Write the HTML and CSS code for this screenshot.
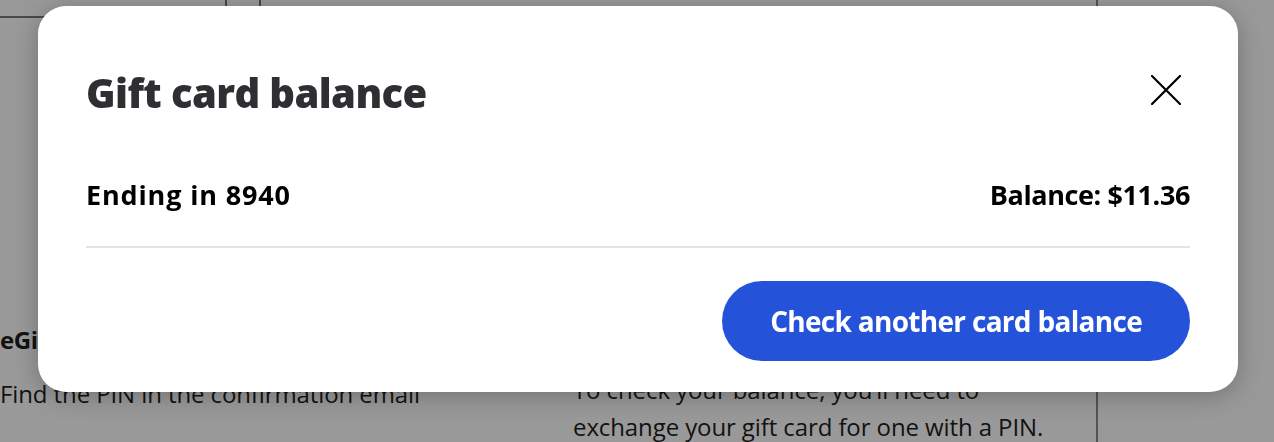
FILE: index.html
```html
<!DOCTYPE html>
<html lang="en">
<head>
<meta charset="utf-8">
<title>Gift card balance</title>
<link rel="stylesheet" href="styles.css">
</head>
<body>
<div class="page">
  <div class="page-top">
    <span class="rule-h"></span>
    <span class="rule-v rule-a"></span>
    <span class="rule-v rule-b"></span>
    <span class="rule-v rule-c"></span>
  </div>
  <div class="page-cols">
    <div class="col col-left">
      <h3 class="col-title">eGift cards</h3>
      <p class="col-text">Find the PIN in the confirmation email</p>
    </div>
    <div class="col col-right">
      <p class="col-text">To check your balance, you’ll need to exchange your gift card for one with a PIN.</p>
    </div>
  </div>
</div>

<div class="overlay"></div>

<div class="modal" role="dialog" aria-labelledby="modal-title">
  <div class="modal-head">
    <h2 class="modal-title" id="modal-title">Gift card balance</h2>
    <button class="close-btn" aria-label="Close">
      <svg width="30" height="30" viewBox="0 0 30 30" aria-hidden="true">
        <path d="M1 1 L29 29 M29 1 L1 29" stroke="#000" stroke-width="2.2" stroke-linecap="square" fill="none"/>
      </svg>
    </button>
  </div>
  <div class="balance-row">
    <span class="balance-label">Ending in 8940</span>
    <span class="balance-value">Balance: $11.36</span>
  </div>
  <div class="modal-actions">
    <button class="primary-btn">Check another card balance</button>
  </div>
</div>
</body>
</html>
```

FILE: styles.css
```css
* { box-sizing: border-box; }

html, body {
  margin: 0;
  padding: 0;
  width: 1274px;
  height: 442px;
  overflow: hidden;
  background: #ffffff;
  font-family: "Open Sans", "Lato", "Liberation Sans", sans-serif;
}

/* ---------- background page ---------- */
.page {
  position: relative;
  width: 1274px;
  height: 442px;
  color: #1f1f1f;
}

.page-top {
  height: 0;
}

.rule-h {
  position: absolute;
  left: 0;
  top: 16px;
  width: 300px;
  height: 2px;
  background: #7a7a7a;
}

.rule-v {
  position: absolute;
  top: 0;
  width: 2px;
  height: 442px;
  background: #7a7a7a;
}
.rule-a { left: 225px; height: 40px; }
.rule-b { left: 259px; height: 40px; }
.rule-c { left: 1096px; background: #8a8a8a; }

.page-cols {
  display: grid;
  grid-template-columns: 573px 500px;
  padding-top: 322px;
}

.col-title {
  margin: 0;
  font-size: 24px;
  font-weight: 700;
  line-height: 36px;
  letter-spacing: -0.4px;
}

.col-text {
  margin: 0;
  font-size: 24px;
  font-weight: 400;
  line-height: 37px;
  letter-spacing: -0.1px;
}

.col-left .col-text { margin-top: 17px; }
.col-right { padding-top: 49px; }

.overlay {
  position: fixed;
  inset: 0;
  background: rgba(0, 0, 0, 0.4);
}

/* ---------- modal ---------- */
.modal {
  position: absolute;
  left: 38px;
  top: 6px;
  width: 1200px;
  height: 386px;
  background: #ffffff;
  border-radius: 28px;
  box-shadow: 0 4px 24px rgba(0, 0, 0, 0.25);
  padding: 63px 48px 32px 48px;
  display: flex;
  flex-direction: column;
}

.modal-head {
  display: flex;
  align-items: center;
  justify-content: space-between;
  height: 48px;
}

.modal-title {
  margin: 0;
  font-size: 40px;
  line-height: 48px;
  font-weight: 800;
  color: #2e2f32;
  letter-spacing: -0.6px;
}

.close-btn {
  border: 0;
  background: transparent;
  padding: 0;
  margin: -6px 9px 0 0;
  width: 30px;
  height: 30px;
  display: flex;
  cursor: pointer;
}

.balance-row {
  margin-top: 62px;
  display: flex;
  justify-content: space-between;
  align-items: center;
  line-height: 32px;
  font-size: 27px;
  font-weight: 700;
  color: #000;
  padding-bottom: 35px;
  border-bottom: 2px solid #e3e4e5;
}

.balance-label { letter-spacing: 0.85px; }
.balance-value { letter-spacing: -0.4px; }

.modal-actions {
  margin-top: 33px;
  display: flex;
  justify-content: flex-end;
}

.primary-btn {
  height: 80px;
  padding: 0 48px;
  border: 0;
  border-radius: 40px;
  background: #2453d9;
  color: #ffffff;
  font-family: inherit;
  font-size: 28px;
  font-weight: 700;
  letter-spacing: -0.7px;
  cursor: pointer;
}
```
